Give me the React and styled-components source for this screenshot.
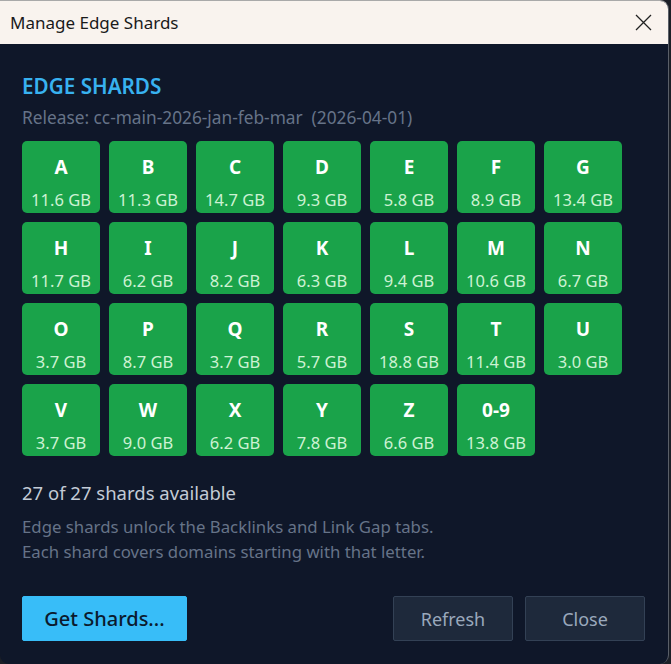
import styled, { createGlobalStyle } from 'styled-components';

const GlobalStyle = createGlobalStyle`
  html, body {
    margin: 0;
    padding: 0;
    background: #1b1f27;
  }
  body {
    font-family: "Noto Sans", "Open Sans", sans-serif;
  }
`;

const shards = [
  ['A', '11.6'], ['B', '11.3'], ['C', '14.7'], ['D', '9.3'], ['E', '5.8'], ['F', '8.9'], ['G', '13.4'],
  ['H', '11.7'], ['I', '6.2'], ['J', '8.2'], ['K', '6.3'], ['L', '9.4'], ['M', '10.6'], ['N', '6.7'],
  ['O', '3.7'], ['P', '8.7'], ['Q', '3.7'], ['R', '5.7'], ['S', '18.8'], ['T', '11.4'], ['U', '3.0'],
  ['V', '3.7'], ['W', '9.0'], ['X', '6.2'], ['Y', '7.8'], ['Z', '6.6'], ['0-9', '13.8'],
];

const Window = styled.div`
  width: 669px;
  height: 664px;
  box-sizing: border-box;
  display: flex;
  flex-direction: column;
  background: #0f1729;
  border-top: 1px solid #a9a9a9;
  border-right: 1px solid #5a5f68;
  border-radius: 0 9px 9px 9px;
  overflow: hidden;
`;

const TitleBar = styled.div`
  height: 43px;
  flex: none;
  display: flex;
  align-items: center;
  justify-content: space-between;
  padding: 0 16px 0 10px;
  background: #f9f3ee;
  color: #1a1a1a;
  font-size: 17px;
`;

const CloseX = styled.button`
  border: none;
  background: none;
  padding: 0;
  display: flex;
  color: #222;
`;

const Body = styled.div`
  flex: 1;
  display: flex;
  flex-direction: column;
  padding: 29px 23px 23px 22px;
`;

const Heading = styled.h2`
  margin: 0;
  color: #38b2f0;
  font-size: 20.7px;
  font-weight: 600;
  line-height: 26px;
`;

const Release = styled.div`
  margin-top: 8px;
  color: #667388;
  font-size: 17.3px;
  line-height: 22px;
  white-space: pre;
`;

const Grid = styled.div`
  margin-top: 12px;
  display: grid;
  grid-template-columns: repeat(7, 78px);
  grid-auto-rows: 72px;
  gap: 9px;
`;

const Tile = styled.div`
  background: #1aa34a;
  border-radius: 5px;
  display: flex;
  flex-direction: column;
  align-items: center;
  padding-top: 14px;
  box-sizing: border-box;
  gap: 11px;
`;

const Letter = styled.div`
  color: #ffffff;
  font-size: 19px;
  font-weight: 700;
  line-height: 24px;
`;

const Size = styled.div`
  color: #cdf2d3;
  font-size: 16.5px;
  line-height: 20px;
`;

const Status = styled.div`
  margin-top: 25px;
  color: #c3cbd6;
  font-size: 18.5px;
  line-height: 24px;
`;

const Note = styled.div`
  margin-top: 9px;
  color: #667388;
  font-size: 16.8px;
  line-height: 25px;
`;

const Footer = styled.div`
  margin-top: auto;
  display: flex;
  align-items: center;
  gap: 12px;
`;

const Button = styled.button`
  height: 45px;
  width: ${p => (p.$primary ? '165px' : '120px')};
  box-sizing: border-box;
  font-family: inherit;
  font-size: ${p => (p.$primary ? '20px' : '18px')};
  border-radius: 2px;
  border: 1px solid ${p => (p.$primary ? '#38bdf8' : '#334155')};
  background: ${p => (p.$primary ? '#38bdf8' : '#1e293b')};
  color: ${p => (p.$primary ? '#0b1a2e' : '#9aa8bc')};
  font-weight: ${p => (p.$primary ? 500 : 400)};
  margin-right: ${p => (p.$primary ? 'auto' : '0')};
`;

export default function App() {
  return (
    <>
      <GlobalStyle />
      <Window>
        <TitleBar>
          <span>Manage Edge Shards</span>
          <CloseX aria-label="Close">
            <svg width="17" height="17" viewBox="0 0 17 17" fill="none" stroke="currentColor" strokeWidth="1.3">
              <path d="M1 1 L16 16 M16 1 L1 16" />
            </svg>
          </CloseX>
        </TitleBar>
        <Body>
          <Heading>EDGE SHARDS</Heading>
          <Release>Release: cc-main-2026-jan-feb-mar  (2026-04-01)</Release>
          <Grid>
            {shards.map(([l, s]) => (
              <Tile key={l}>
                <Letter>{l}</Letter>
                <Size>{s} GB</Size>
              </Tile>
            ))}
          </Grid>
          <Status>27 of 27 shards available</Status>
          <Note>
            Edge shards unlock the Backlinks and Link Gap tabs.
            <br />
            Each shard covers domains starting with that letter.
          </Note>
          <Footer>
            <Button $primary>Get Shards...</Button>
            <Button>Refresh</Button>
            <Button>Close</Button>
          </Footer>
        </Body>
      </Window>
    </>
  );
}
